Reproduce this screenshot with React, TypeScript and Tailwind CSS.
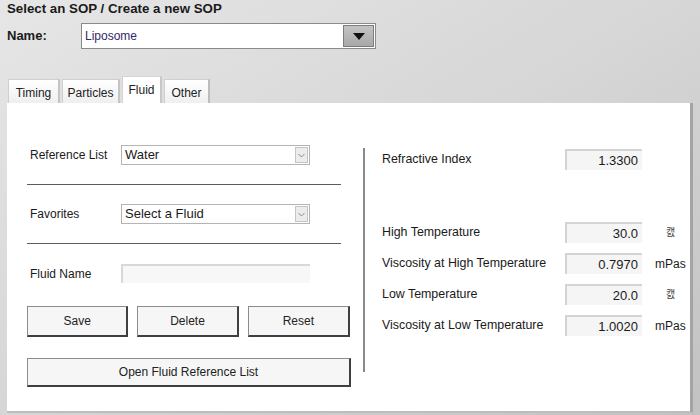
import React from "react";

const font = { fontFamily: '"Liberation Sans", Arial, "Noto Sans CJK KR", sans-serif' };

function Chevron() {
  return (
    <div className="flex h-[16px] w-[13px] items-center justify-center border border-[#c4c4c4] bg-[#ececec]">
      <svg width="7" height="5" viewBox="0 0 7 5">
        <polyline points="0.5,1 3.5,4 6.5,1" fill="none" stroke="#8a8a8a" strokeWidth="1" />
      </svg>
    </div>
  );
}

function Select({ value }: { value: string }) {
  return (
    <div className="flex h-[20px] w-[189px] items-center justify-between border border-[#b4b4b4] bg-white pl-[3px] pr-[1px]">
      <span className="text-[13px] text-[#1a1a1a]">{value}</span>
      <Chevron />
    </div>
  );
}

function Button({ label, className }: { label: string; className: string }) {
  return (
    <div
      className={`flex items-center justify-center border border-t-[#8c8c8c] border-l-[#8c8c8c] border-r-2 border-b-2 border-r-[#404040] border-b-[#404040] bg-[#f6f6f6] text-[12px] text-[#222] ${className}`}
    >
      {label}
    </div>
  );
}

function Field({ label, value, unit, top }: { label: string; value: string; unit: string; top: string }) {
  return (
    <div className={`flex items-center ${top}`}>
      <span className="w-[183px] text-[12.4px] text-[#1a1a1a]">{label}</span>
      <div className="flex h-[21px] w-[77px] items-center justify-end border-l-2 border-t-2 border-[#d4d4d4] bg-[#f5f5f5] pr-[4px] text-[13px] text-[#1a1a1a]">
        {value}
      </div>
      {unit === "mPas" ? (
        <span className="ml-[13px] text-[12px] text-[#1a1a1a]">mPas</span>
      ) : unit ? (
        <span className="ml-[24px] text-[10px] text-[#444]">{unit}</span>
      ) : null}
    </div>
  );
}

export default function App() {
  return (
    <div
      className="relative h-[415px] w-[700px] overflow-hidden bg-gradient-to-br from-[#e6e6e6] via-[#d6d6d6] to-[#c2c2c2]"
      style={font}
    >
      <div className="pl-[7px] pt-[1px] text-[13.3px] font-bold leading-[16px] text-[#1a1a1a]">
        Select an SOP / Create a new SOP
      </div>

      <div className="mt-[6px] flex items-center pl-[7px]">
        <span className="w-[74px] text-[13px] font-bold text-[#1a1a1a]">Name:</span>
        <div className="flex h-[26px] w-[295px] items-center justify-between border border-[#8a8a8a] bg-white pl-[3px] pr-[1px] shadow-[inset_0_0_0_1px_#ffffff]">
          <span className="text-[12px] text-[#33286a]">Liposome</span>
          <div className="flex h-[22px] w-[31px] items-center justify-center border border-[#7c7c7c] bg-gradient-to-b from-[#c4c4c4] to-[#a8a8a8]">
            <svg width="12" height="7" viewBox="0 0 12 7">
              <polygon points="0,0 12,0 6,7" fill="#111" />
            </svg>
          </div>
        </div>
      </div>

      <div className="mt-[27px] flex items-end pl-[8px]">
        <div className="flex h-[24px] w-[52px] items-center justify-center border-r-2 border-t border-l border-[#cfcfcf] border-r-[#c4c4c4] bg-gradient-to-b from-white to-[#efefef] pt-[3px] text-[12px] text-[#222]">
          Timing
        </div>
        <div className="ml-[2px] flex h-[24px] w-[58px] items-center justify-center border-r-2 border-t border-l border-[#cfcfcf] border-r-[#c4c4c4] bg-gradient-to-b from-white to-[#efefef] pt-[3px] text-[12px] text-[#222]">
          Particles
        </div>
        <div className="relative z-10 ml-[2px] flex h-[27px] w-[40px] items-start justify-center border-r-2 border-t border-l border-[#d4d4d4] border-r-[#c8c8c8] bg-white pt-[4px] text-[12px] text-[#222]">
          Fluid
        </div>
        <div className="ml-[2px] flex h-[24px] w-[46px] items-center justify-center border-r-2 border-t border-l border-[#cfcfcf] border-r-[#bcbcbc] bg-gradient-to-b from-white to-[#efefef] pt-[3px] text-[12px] text-[#222]">
          Other
        </div>
      </div>

      <div className="ml-[7px] flex h-[310px] w-[686px] border-b-2 border-r-[3px] border-b-[#bdbdbd] border-r-[#a4a4a4] bg-white">
        <div className="ml-[20px] flex w-[323px] flex-col pt-[42px]">
          <div className="flex items-center">
            <span className="w-[94px] pl-[3px] text-[12px] text-[#1a1a1a]">Reference List</span>
            <Select value="Water" />
          </div>
          <div className="mt-[19px] w-[314px] border-t border-[#5c5c5c]" />
          <div className="mt-[19px] flex items-center">
            <span className="w-[94px] pl-[3px] text-[12px] text-[#1a1a1a]">Favorites</span>
            <Select value="Select a Fluid" />
          </div>
          <div className="mt-[19px] w-[314px] border-t border-[#5c5c5c]" />
          <div className="mt-[19px] flex items-center">
            <span className="w-[94px] pl-[3px] pt-[2px] text-[12px] text-[#1a1a1a]">Fluid Name</span>
            <div className="h-[19px] w-[189px] border-l-2 border-t-2 border-[#d8d8d8] bg-[#f7f7f7]" />
          </div>
          <div className="mt-[23px] flex gap-[9px]">
            <Button label="Save" className="h-[31px] w-[102px]" />
            <Button label="Delete" className="h-[31px] w-[102px]" />
            <Button label="Reset" className="h-[31px] w-[103px]" />
          </div>
          <Button label="Open Fluid Reference List" className="mt-[21px] h-[29px] w-[324px]" />
        </div>

        <div className="ml-[13px] mt-[45px] h-[224px] w-[2px] bg-[#8a8a8a]" />

        <div className="ml-[17px] flex flex-col pt-[46px]">
          <Field label="Refractive Index" value="1.3300" unit="" top="" />
          <Field label="High Temperature" value="30.0" unit="캜" top="mt-[52px]" />
          <Field label="Viscosity at High Temperature" value="0.7970" unit="mPas" top="mt-[10px]" />
          <Field label="Low Temperature" value="20.0" unit="캜" top="mt-[10px]" />
          <Field label="Viscosity at Low Temperature" value="1.0020" unit="mPas" top="mt-[10px]" />
        </div>
      </div>
    </div>
  );
}
